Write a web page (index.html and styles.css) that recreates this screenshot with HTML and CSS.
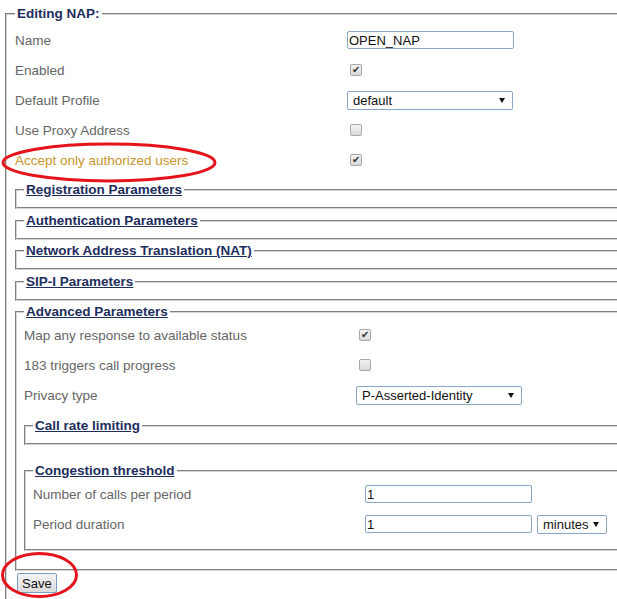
FILE: index.html
```html
<!DOCTYPE html>
<html lang="en">
<head>
    <meta charset="UTF-8">
    <title>Editing NAP</title>
    <link rel="stylesheet" href="styles.css">
</head>
<body>
    <form class="nap-form">
        <fieldset class="box">
            <legend class="box-title">Editing NAP:</legend>

            <div class="row">
                <label>Name</label>
                <input type="text" class="text-input" value="OPEN_NAP">
            </div>
            <div class="row">
                <label>Enabled</label>
                <input type="checkbox" class="check" checked>
            </div>
            <div class="row">
                <label>Default Profile</label>
                <span class="select-wrap"><select class="select"><option>default</option></select></span>
            </div>
            <div class="row">
                <label>Use Proxy Address</label>
                <input type="checkbox" class="check">
            </div>
            <div class="row">
                <label class="warn">Accept only authorized users</label>
                <input type="checkbox" class="check" checked>
            </div>

            <fieldset class="sub">
                <legend class="sub-title"><a href="#">Registration Parameters</a></legend>
            </fieldset>
            <fieldset class="sub">
                <legend class="sub-title"><a href="#">Authentication Parameters</a></legend>
            </fieldset>
            <fieldset class="sub">
                <legend class="sub-title"><a href="#">Network Address Translation (NAT)</a></legend>
            </fieldset>
            <fieldset class="sub">
                <legend class="sub-title"><a href="#">SIP-I Parameters</a></legend>
            </fieldset>

            <fieldset class="sub advanced">
                <legend class="sub-title"><a href="#">Advanced Parameters</a></legend>
                <div class="row">
                    <label>Map any response to available status</label>
                    <input type="checkbox" class="check" checked>
                </div>
                <div class="row">
                    <label>183 triggers call progress</label>
                    <input type="checkbox" class="check">
                </div>
                <div class="row">
                    <label>Privacy type</label>
                    <span class="select-wrap"><select class="select"><option>P-Asserted-Identity</option></select></span>
                </div>

                <fieldset class="sub">
                    <legend class="sub-title"><a href="#">Call rate limiting</a></legend>
                </fieldset>

                <fieldset class="sub congestion">
                    <legend class="sub-title"><a href="#">Congestion threshold</a></legend>
                    <div class="row">
                        <label>Number of calls per period</label>
                        <input type="text" class="text-input" value="1">
                    </div>
                    <div class="row">
                        <label>Period duration</label>
                        <div class="inline">
                            <input type="text" class="text-input" value="1">
                            <span class="select-wrap small"><select class="select"><option>minutes</option></select></span>
                        </div>
                    </div>
                </fieldset>
            </fieldset>

            <button type="button" class="save">Save</button>
        </fieldset>
    </form>

    <!-- annotation marks drawn over the form -->
    <svg class="marks" width="617" height="599" viewBox="0 0 617 599">
        <ellipse cx="109" cy="162.5" rx="106" ry="18.5" fill="none" stroke="#e5131b" stroke-width="3"/>
        <ellipse cx="39.5" cy="575" rx="37" ry="21.5" fill="none" stroke="#e5131b" stroke-width="3"/>
    </svg>
</body>
</html>
```

FILE: styles.css
```css
html {
    overflow: hidden;
}

body {
    margin: 0;
    padding: 6px 0 0 5px;
    font-family: 'Liberation Sans', Arial, sans-serif;
    font-size: 13.5px;
    color: #666;
    background: white;
}

.nap-form {
    width: 700px;
}

fieldset {
    margin: 0;
    border: 2px groove #d4d4d4;
    min-width: 0;
}

.box {
    padding: 3px 0 20px 8px;
}

.box-title,
.sub-title {
    padding: 0 2px;
    font-weight: bold;
    line-height: 16px;
    color: #1d2d5c;
}

.sub-title a {
    color: #1d2d5c;
    text-decoration: underline;
}

.sub {
    padding: 0 0 9px 7px;
    margin-top: 3.5px;
}

.box > .row + .sub {
    margin-top: 7px;
}

.advanced {
    padding-bottom: 18px;
}

.advanced > .row + .sub {
    margin-top: 8px;
}

.congestion {
    margin-top: 18px;
    padding-bottom: 10px;
}

.row {
    display: grid;
    grid-template-columns: 332px auto;
    align-items: center;
    height: 30px;
}

.warn {
    color: #c8952b;
}

.text-input {
    box-sizing: border-box;
    width: 167px;
    height: 18px;
    margin: 0;
    padding: 0 1px;
    border: 1px solid #88a6c6;
    border-radius: 2px;
    font-family: 'Liberation Sans', Arial, sans-serif;
    font-size: 13px;
    color: #111;
    outline: none;
}

.inline {
    display: flex;
    align-items: center;
    gap: 5px;
}

.check {
    appearance: none;
    position: relative;
    width: 12px;
    height: 12px;
    margin: 0 0 0 3px;
    border: 1px solid #a8a8a8;
    border-radius: 2px;
    background: linear-gradient(#f2f2f2, #d9d9d9);
}

.check:checked::after {
    content: "✔";
    position: absolute;
    left: 1px;
    top: -1px;
    font-size: 10px;
    line-height: 12px;
    color: #333;
}

.select-wrap {
    position: relative;
    display: inline-block;
    width: 166px;
}

.select-wrap.small {
    width: 70px;
}

.select-wrap::after {
    content: "";
    position: absolute;
    right: 8px;
    top: 7px;
    border-left: 3px solid transparent;
    border-right: 3px solid transparent;
    border-top: 5px solid #111;
}

.select {
    appearance: none;
    box-sizing: border-box;
    width: 100%;
    height: 19px;
    margin: 0;
    padding: 0 0 0 5px;
    border: 1px solid #88a6c6;
    border-radius: 2px;
    background: white;
    font-family: 'Liberation Sans', Arial, sans-serif;
    font-size: 13px;
    color: #111;
    outline: none;
}

.save {
    margin: 2px 0 0 2px;
    height: 20px;
    padding: 0 4px;
    border: 1px solid #7a9ec0;
    border-radius: 2px;
    background: linear-gradient(#f4f4f4, #dcdcdc);
    font-family: 'Liberation Sans', Arial, sans-serif;
    font-size: 13px;
    color: #111;
}

.marks {
    position: absolute;
    left: 0;
    top: 0;
    pointer-events: none;
}
```
